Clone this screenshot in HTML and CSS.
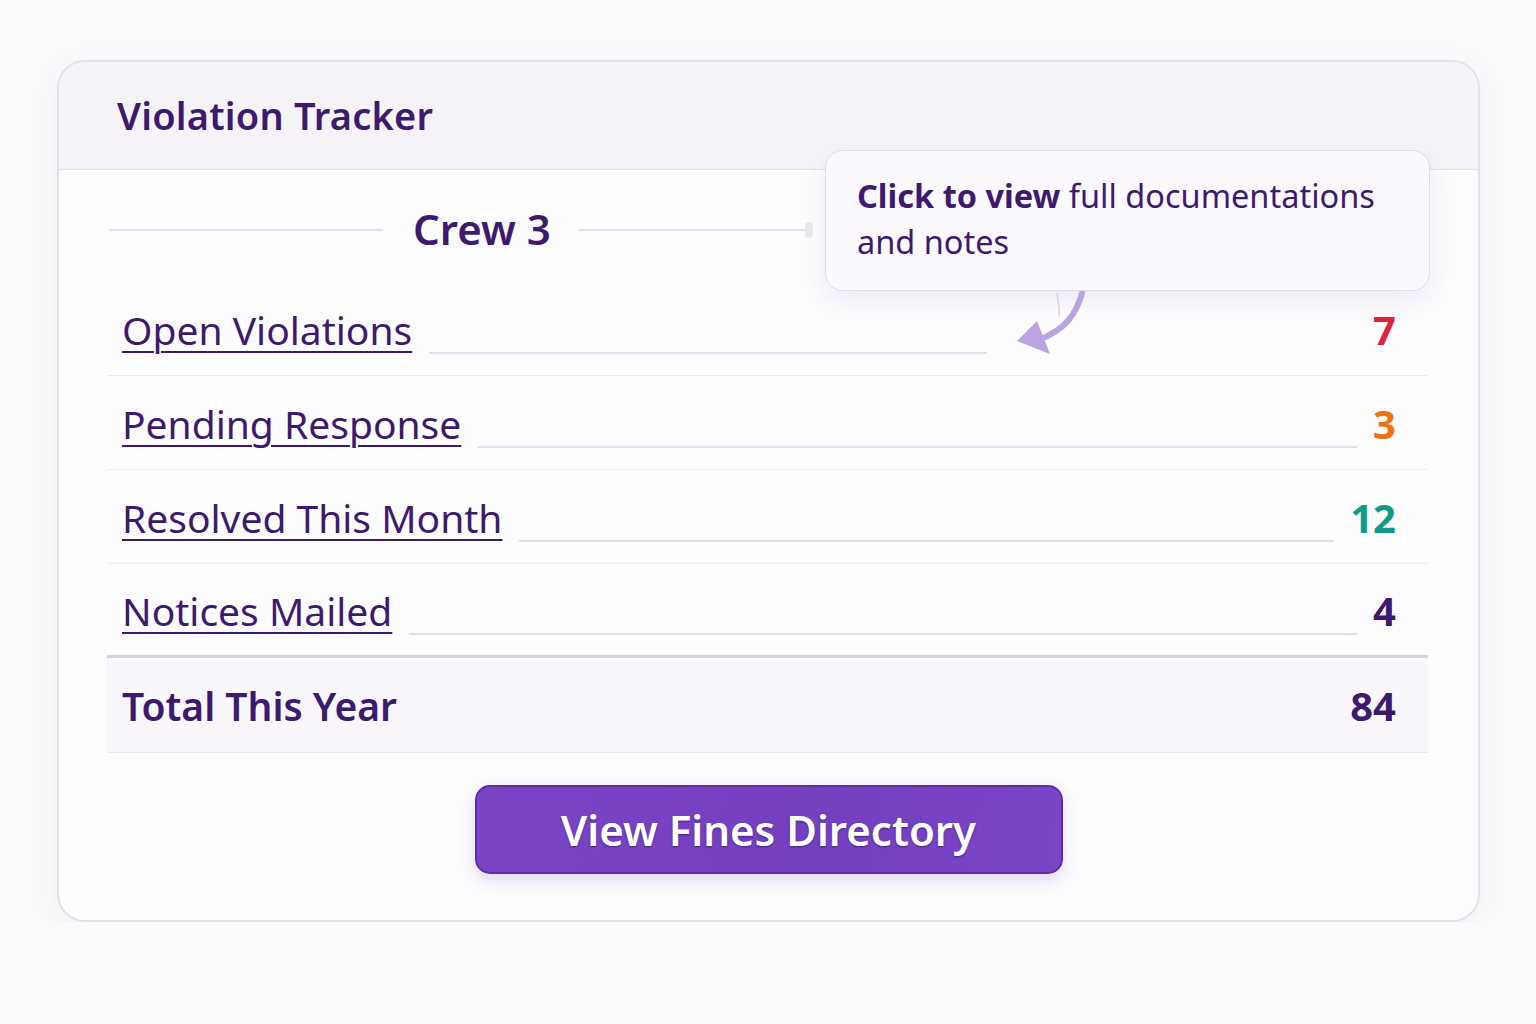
FILE: index.html
```html
<!DOCTYPE html>
<html lang="en">
<head>
    <meta charset="UTF-8">
    <meta name="viewport" content="width=device-width, initial-scale=1.0">
    <title>Violation Tracker</title>
    <link rel="stylesheet" href="styles.css">
</head>
<body>
    <div class="tracker-card">
        <div class="tracker-header">
            <h1>Violation Tracker</h1>
        </div>

        <div class="tracker-body">
            <div class="crew-row">
                <span class="crew-line"></span>
                <h2 class="crew-name">Crew 3</h2>
                <span class="crew-line crew-line-right"><span class="crew-knob"></span></span>
            </div>

            <div class="stat-row">
                <a href="#" class="stat-link">Open Violations</a>
                <span class="leader leader-short"></span>
                <span class="stat-value red">7</span>
            </div>
            <div class="stat-row">
                <a href="#" class="stat-link">Pending Response</a>
                <span class="leader"></span>
                <span class="stat-value orange">3</span>
            </div>
            <div class="stat-row">
                <a href="#" class="stat-link">Resolved This Month</a>
                <span class="leader"></span>
                <span class="stat-value teal">12</span>
            </div>
            <div class="stat-row last">
                <a href="#" class="stat-link">Notices Mailed</a>
                <span class="leader"></span>
                <span class="stat-value">4</span>
            </div>

            <div class="total-row">
                <span class="total-label">Total This Year</span>
                <span class="stat-value">84</span>
            </div>

            <div class="tracker-footer">
                <button class="fines-button">View Fines Directory</button>
            </div>
        </div>

        <!-- hint bubble pointing at the first link -->
        <div class="hint">
            <p><strong>Click to view</strong> full documentations and notes</p>
        </div>
        <svg class="hint-arrow" width="90" height="80" viewBox="0 0 90 80">
            <path d="M42 2 C43 10 45 18 44 25" fill="none" stroke="#d9cdee" stroke-width="1.5"/>
            <path d="M67 2 C61 24 50 38 26 48" fill="none" stroke="#b9a3e1" stroke-width="6" stroke-linecap="round"/>
            <path d="M2 50 L22 30 L35 63 Z" fill="#b9a3e1"/>
        </svg>
    </div>
</body>
</html>
```

FILE: styles.css
```css
* {
    margin: 0;
    padding: 0;
    box-sizing: border-box;
}

body {
    background: #fbfafc;
    font-family: "Noto Sans", "Open Sans", sans-serif;
    color: #3d1a6e;
    padding: 60px 56px 0 57px;
}

.tracker-card {
    position: relative;
    width: 1423px;
    height: 862px;
    border: 2px solid #e3e1e8;
    border-radius: 28px;
    background: #fdfcfe;
    box-shadow: 0 6px 30px rgba(80, 60, 120, 0.06);
    overflow: hidden;
}

.tracker-header {
    height: 108px;
    background: #f5f3f8;
    border-bottom: 1.5px solid #e2dfe8;
    display: flex;
    align-items: center;
    padding-left: 58px;
}

.tracker-header h1 {
    font-size: 38px;
    font-weight: 600;
    letter-spacing: 0.2px;
    margin-top: -2px;
}

.tracker-body {
    padding: 0 50px 0 48px;
}

/* crew title with rules either side */
.crew-row {
    height: 112px;
    display: flex;
    align-items: center;
    padding: 8px 0 0 2px;
}

.crew-line {
    width: 274px;
    height: 2px;
    background: #e4def0;
}

.crew-line-right {
    position: relative;
    width: 232px;
}

.crew-knob {
    position: absolute;
    right: -2px;
    top: -7px;
    width: 8px;
    height: 16px;
    border-radius: 4px;
    background: #ebe6f3;
}

.crew-name {
    font-size: 42px;
    font-weight: 600;
    margin: -4px 28px 0 30px;
}

.stat-row {
    height: 94px;
    display: flex;
    align-items: center;
    padding: 0 32px 0 15px;
    border-bottom: 1.5px solid #edeaf2;
}

.stat-row.last {
    border-bottom: 3px solid #d6d2de;
}

.stat-link {
    font-size: 39px;
    color: #3d1a6e;
    text-decoration: underline;
    text-decoration-thickness: 2px;
    text-underline-offset: 6px;
    white-space: nowrap;
    margin-top: 1px;
}

.leader {
    flex: 1;
    height: 2px;
    background: #e2dcef;
    margin: 48px 16px 0 17px;
}

.leader-short {
    flex: none;
    width: 558px;
    margin-right: auto;
}

.stat-value {
    font-size: 40px;
    font-weight: 700;
    color: #3d1a6e;
    text-align: right;
    margin-top: 2px;
}

.red {
    color: #e1223f;
}

.orange {
    color: #f0720f;
}

.teal {
    color: #12998a;
}

.total-row {
    height: 95px;
    display: flex;
    align-items: center;
    justify-content: space-between;
    padding: 0 32px 0 15px;
    background: #f9f7fb;
    border-bottom: 1.5px solid #ebe8f0;
}

.total-row .stat-value {
    margin-top: 0;
}

.total-label {
    font-size: 39px;
    font-weight: 600;
}

.tracker-footer {
    display: flex;
    justify-content: center;
    padding-top: 32px;
}

.fines-button {
    width: 588px;
    height: 89px;
    margin-left: 2px;
    border: 2px solid #5b2ea6;
    border-radius: 15px;
    background: linear-gradient(100deg, #7a44c6, #7340c0 60%, #7a46c8);
    color: #fff;
    font-family: "Noto Sans", "Open Sans", sans-serif;
    font-size: 42px;
    font-weight: 600;
    text-shadow: 0 1px 2px rgba(40, 10, 80, 0.6);
    box-shadow: 0 6px 16px rgba(90, 50, 160, 0.18);
    cursor: pointer;
}

.hint {
    position: absolute;
    left: 766px;
    top: 88px;
    width: 605px;
    height: 141px;
    padding: 22px 16px 0 31px;
    background: #fbf9fe;
    border: 1.5px solid #e1d9f1;
    border-radius: 18px;
    box-shadow: 0 8px 24px rgba(90, 60, 150, 0.1);
    font-size: 32.5px;
    line-height: 46px;
    color: #3d1a6e;
}

.hint p {
    max-width: 550px;
}

.hint strong {
    font-weight: 700;
}

.hint-arrow {
    position: absolute;
    left: 956px;
    top: 229px;
}
```
